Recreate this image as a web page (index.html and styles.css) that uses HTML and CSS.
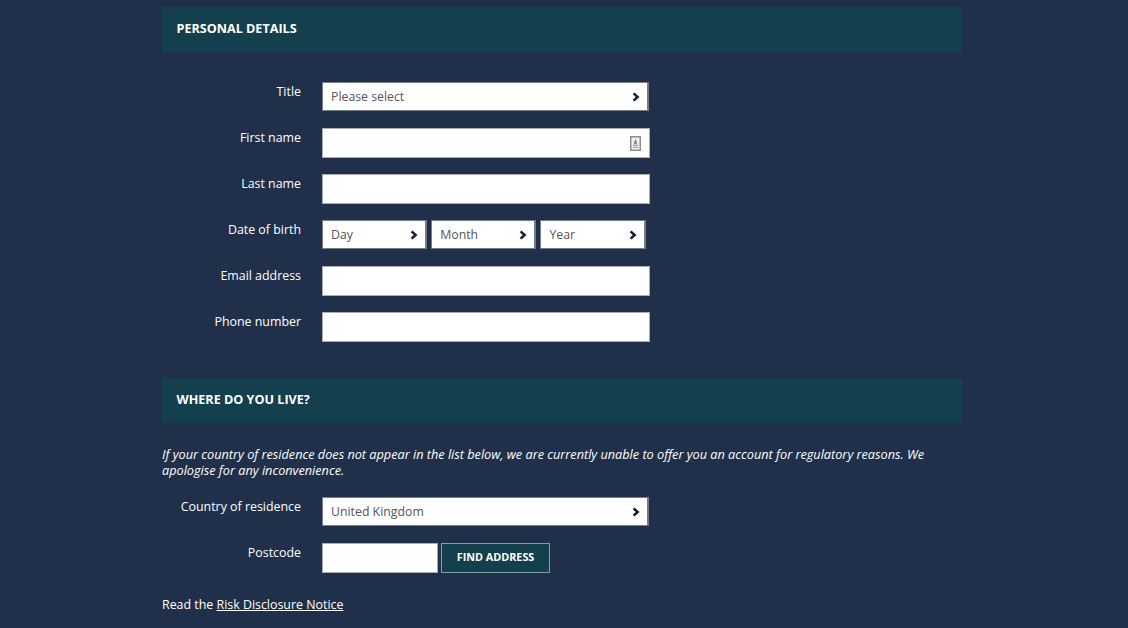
FILE: index.html
```html
<!DOCTYPE html>
<html lang="en" dir="ltr">

<head>
    <meta charset="utf-8">
    <title>Personal details</title>
    <link rel="stylesheet" href="styles.css">
</head>

<body>
    <form class="wrap">
        <h2 class="secHead">PERSONAL DETAILS</h2>
        <div class="fields">
            <div class="row">
                <label class="lbl">Title</label>
                <div class="sel selWide"><span>Please select</span>
                    <svg class="chev" width="8" height="10" viewBox="0 0 8 10"><path d="M1.6 1.4 L5.6 5 L1.6 8.6" fill="none" stroke="#14203a" stroke-width="2.6"/></svg>
                </div>
            </div>
            <div class="row">
                <label class="lbl">First name</label>
                <div class="inpBox">
                    <input class="inp" type="text">
                    <svg class="cardIcon" width="11" height="15" viewBox="0 0 11 15"><rect x="0.75" y="0.75" width="9.5" height="13.5" fill="#f1f1f1" stroke="#8d8d8d" stroke-width="1.5"/><path d="M5.5 2.8 L7.2 7.8 H3.8 Z" fill="#777"/><path d="M3 8.6h5v1.3h-5zM3 10.7h5v1.3h-5z" fill="#aaa"/></svg>
                </div>
            </div>
            <div class="row">
                <label class="lbl">Last name</label>
                <input class="inp" type="text">
            </div>
            <div class="row">
                <label class="lbl">Date of birth</label>
                <div class="dob">
                    <div class="sel"><span>Day</span>
                        <svg class="chev" width="8" height="10" viewBox="0 0 8 10"><path d="M1.6 1.4 L5.6 5 L1.6 8.6" fill="none" stroke="#14203a" stroke-width="2.6"/></svg>
                    </div>
                    <div class="sel"><span>Month</span>
                        <svg class="chev" width="8" height="10" viewBox="0 0 8 10"><path d="M1.6 1.4 L5.6 5 L1.6 8.6" fill="none" stroke="#14203a" stroke-width="2.6"/></svg>
                    </div>
                    <div class="sel"><span>Year</span>
                        <svg class="chev" width="8" height="10" viewBox="0 0 8 10"><path d="M1.6 1.4 L5.6 5 L1.6 8.6" fill="none" stroke="#14203a" stroke-width="2.6"/></svg>
                    </div>
                </div>
            </div>
            <div class="row">
                <label class="lbl">Email address</label>
                <input class="inp" type="text">
            </div>
            <div class="row">
                <label class="lbl">Phone number</label>
                <input class="inp" type="text">
            </div>
        </div>

        <h2 class="secHead">WHERE DO YOU LIVE?</h2>
        <p class="note">If your country of residence does not appear in the list below, we are currently unable to offer you an account for regulatory reasons. We apologise for any inconvenience.</p>
        <div class="row">
            <label class="lbl">Country of residence</label>
            <div class="sel selWide"><span>United Kingdom</span>
                <svg class="chev" width="8" height="10" viewBox="0 0 8 10"><path d="M1.6 1.4 L5.6 5 L1.6 8.6" fill="none" stroke="#14203a" stroke-width="2.6"/></svg>
            </div>
        </div>
        <div class="row">
            <label class="lbl">Postcode</label>
            <input class="inp inpShort" type="text">
            <button class="btnFind" type="button">FIND ADDRESS</button>
        </div>
        <p class="risk">Read the <a href="#">Risk Disclosure Notice</a></p>
    </form>
</body>

</html>
```

FILE: styles.css
```css
body {
    margin: 0;
    background: #20304a;
    color: white;
    font-family: 'Open Sans', sans-serif;
    font-size: 12.4px;
}

.wrap {
    width: 800px;
    margin-left: 162px;
    padding-top: 7px;
}

.secHead {
    margin: 0;
    height: 45px;
    line-height: 43px;
    padding-left: 14.5px;
    background-color: #14404d;
    font-size: 12.6px;
    font-weight: 700;
}

.fields {
    padding-top: 30px;
    padding-bottom: 20px;
}

.row {
    display: flex;
    align-items: flex-start;
    height: 30px;
    margin-bottom: 16px;
}

.lbl {
    width: 139px;
    margin-right: 21px;
    text-align: right;
    line-height: 20px;
}

.sel {
    box-sizing: border-box;
    display: flex;
    align-items: center;
    justify-content: space-between;
    width: 105.3px;
    height: 29px;
    padding: 0 7px 0 8px;
    background: white;
    border: 1px solid #767c86;
    border-right-width: 2px;
    color: #555;
    font-size: 12.3px;
}

.selWide {
    width: 327px;
}

.dob {
    display: flex;
    gap: 3.9px;
}

.inp {
    box-sizing: border-box;
    display: block;
    width: 328px;
    height: 30px;
    margin: 0;
    padding: 0 8px;
    background: white;
    border: 1px solid #a9acb2;
    border-radius: 0;
}

.inpBox {
    position: relative;
}

.cardIcon {
    position: absolute;
    top: 8px;
    right: 9px;
}

.inpShort {
    width: 116px;
}

.btnFind {
    box-sizing: border-box;
    width: 109px;
    height: 30px;
    margin-left: 3px;
    padding: 0 0 3px;
    background-color: #14404d;
    border: 1px solid #77a3a3;
    border-radius: 0;
    color: white;
    font-family: 'Open Sans', sans-serif;
    font-size: 10.8px;
    font-weight: 700;
}

.note {
    margin: 0;
    padding-top: 23px;
    padding-bottom: 19px;
    font-size: 12.7px;
    font-style: italic;
    line-height: 16px;
}

.risk {
    margin: 0;
    padding-top: 7px;
    line-height: 18px;
}

.risk a {
    color: white;
}
```
